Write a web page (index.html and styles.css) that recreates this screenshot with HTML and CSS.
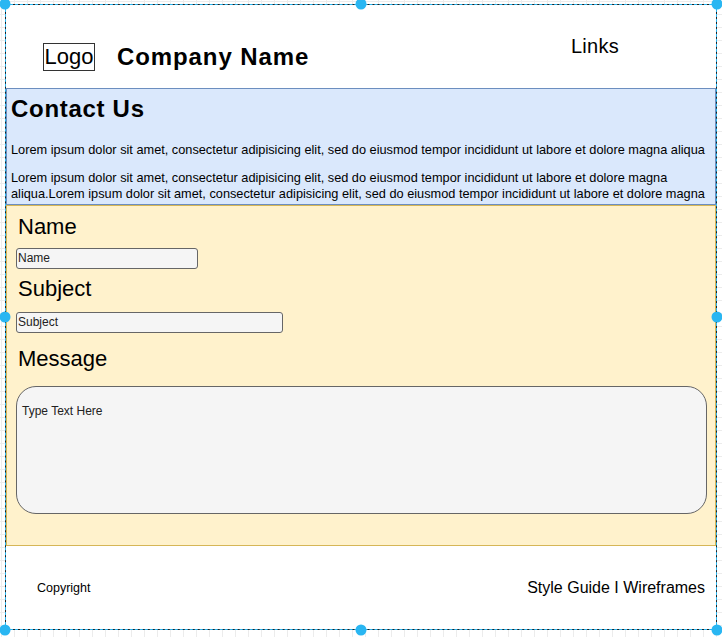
FILE: index.html
```html
<!DOCTYPE html>
<html>
<head>
<meta charset="utf-8">
<link rel="stylesheet" href="styles.css">
</head>
<body>
<div class="frame">
  <header class="header">
    <div class="brand">
      <div class="logo">Logo</div>
      <div class="company">Company Name</div>
    </div>
    <div class="links">Links</div>
  </header>
  <section class="contact">
    <h1 class="title">Contact Us</h1>
    <p class="para">Lorem ipsum dolor sit amet, consectetur adipisicing elit, sed do eiusmod tempor incididunt ut labore et dolore magna aliqua</p>
    <p class="para para2">Lorem ipsum dolor sit amet, consectetur adipisicing elit, sed do eiusmod tempor incididunt ut labore et dolore magna aliqua.Lorem ipsum dolor sit amet, consectetur adipisicing elit, sed do eiusmod tempor incididunt ut labore et dolore magna aliqua</p>
  </section>
  <section class="form">
    <div class="label label-name">Name</div>
    <div class="input input-name">Name</div>
    <div class="label label-subject">Subject</div>
    <div class="input input-subject">Subject</div>
    <div class="label label-message">Message</div>
    <div class="textarea">Type Text Here</div>
  </section>
  <footer class="footer">
    <div class="copyright">Copyright</div>
    <div class="footlinks">Style Guide I Wireframes</div>
  </footer>
  <div class="selection"></div>
  <span class="handle h-tl"></span>
  <span class="handle h-tc"></span>
  <span class="handle h-tr"></span>
  <span class="handle h-ml"></span>
  <span class="handle h-mr"></span>
  <span class="handle h-bl"></span>
  <span class="handle h-bc"></span>
  <span class="handle h-br"></span>
</div>
</body>
</html>
```
FILE: styles.css
```css
html, body {
  margin: 0;
  padding: 0;
}
body {
  width: 722px;
  height: 637px;
  overflow: hidden;
  font-family: "Liberation Sans", Arial, sans-serif;
  color: #000;
  background-color: #fff;
  background-image:
    linear-gradient(to right, #ececec 1px, transparent 1px),
    linear-gradient(to bottom, #ececec 1px, transparent 1px);
  background-size: 13px 13px;
  background-position: 1px 1px;
}
.frame {
  position: relative;
  margin: 4px 0 0 5px;
  width: 712px;
  height: 626px;
  box-sizing: border-box;
  border: 1px solid #222;
  background: #fff;
  display: flex;
  flex-direction: column;
}
.header {
  height: 83px;
  display: flex;
  align-items: flex-start;
  flex: none;
}
.brand {
  display: flex;
  align-items: center;
  margin: 37px 0 0 37px;
  gap: 22px;
}
.logo {
  box-sizing: border-box;
  width: 52px;
  height: 28px;
  border: 1px solid #333;
  font-size: 22px;
  line-height: 26px;
  text-align: center;
  color: #000;
}
.company {
  font-size: 24px;
  font-weight: bold;
  line-height: 28px;
  letter-spacing: 0.9px;
  margin-top: 1px;
}
.links {
  margin: 29px 0 0 auto;
  width: 100px;
  padding-right: 71px;
  font-size: 20px;
  line-height: 24px;
  letter-spacing: 0.3px;
  text-align: center;
}
.contact {
  flex: none;
  height: 117px;
  box-sizing: border-box;
  background: #dae8fc;
  border: 1px solid #6c8ebf;
  padding: 6px 0 0 4px;
  overflow: hidden;
}
.title {
  margin: 0;
  font-size: 24px;
  line-height: 28px;
  font-weight: bold;
  letter-spacing: 0.7px;
}
.para {
  margin: 19px 0 0;
  font-size: 12.75px;
  line-height: 16px;
  white-space: nowrap;
}
.para2 {
  margin-top: 12px;
  white-space: normal;
  width: 700px;
}
.form {
  flex: none;
  height: 341px;
  box-sizing: border-box;
  background: #fff2cc;
  border: 1px solid #d6b656;
  padding: 8px 8px 0 9px;
}
.label {
  font-size: 22px;
  line-height: 26px;
  margin-left: 2px;
}
.input {
  box-sizing: border-box;
  height: 21px;
  background: #f5f5f5;
  border: 1px solid #666;
  border-radius: 3px;
  font-size: 12px;
  line-height: 19px;
  padding-left: 1px;
  color: #222;
}
.input-name {
  width: 182px;
  margin-top: 8px;
}
.label-subject {
  margin-top: 7px;
}
.input-subject {
  width: 267px;
  margin-top: 10px;
}
.label-message {
  margin-top: 13px;
}
.textarea {
  box-sizing: border-box;
  margin-top: 14px;
  height: 128px;
  background: #f5f5f5;
  border: 1px solid #666;
  border-radius: 20px;
  padding: 16px 0 0 5px;
  font-size: 12px;
  line-height: 16px;
  color: #222;
}
.footer {
  flex: 1;
  display: flex;
  align-items: center;
  justify-content: space-between;
  padding: 0 11px 0 31px;
}
.copyright {
  font-size: 12.5px;
  line-height: 16px;
}
.footlinks {
  font-size: 16px;
  line-height: 20px;
}
.selection {
  position: absolute;
  inset: -1px;
  border: 1px dashed #29b6f2;
  pointer-events: none;
}
.handle {
  position: absolute;
  width: 11px;
  height: 11px;
  border-radius: 50%;
  background: #29b6f2;
  transform: translate(-50%, -50%);
}
.h-tl { left: -1px; top: -1px; }
.h-tc { left: 50%; top: -1px; }
.h-tr { left: calc(100% + 1px); top: -1px; }
.h-ml { left: -1px; top: 50%; }
.h-mr { left: calc(100% + 1px); top: 50%; }
.h-bl { left: -1px; top: calc(100% + 1px); }
.h-bc { left: 50%; top: calc(100% + 1px); }
.h-br { left: calc(100% + 1px); top: calc(100% + 1px); }
```
